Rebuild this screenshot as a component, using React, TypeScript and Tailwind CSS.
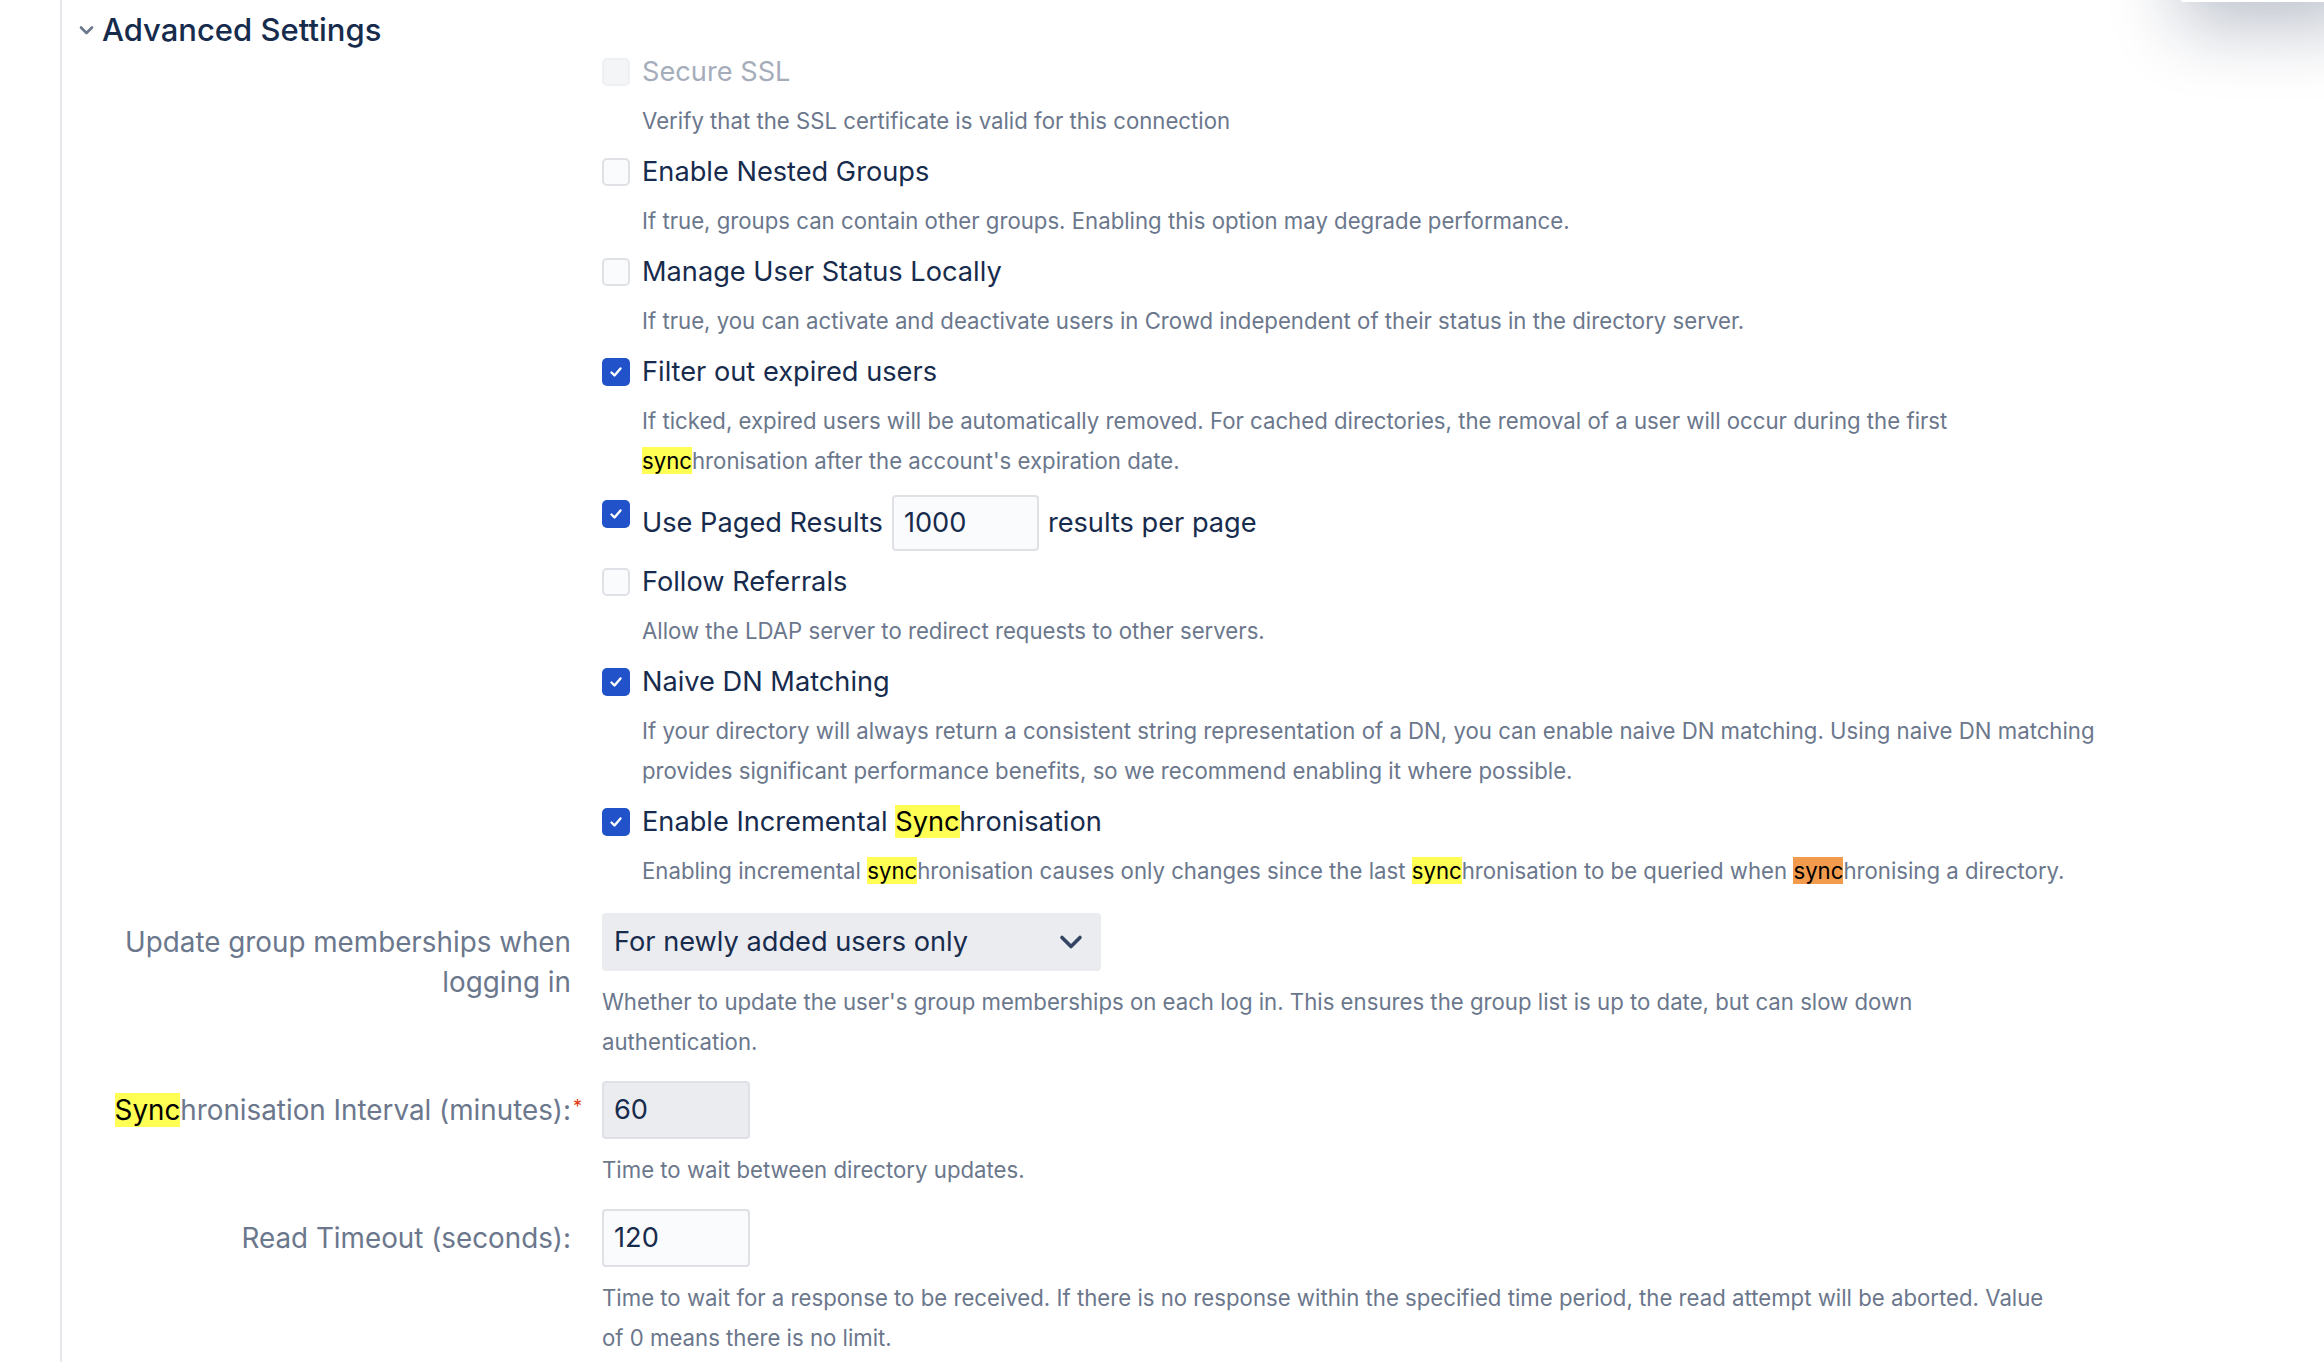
import type { ReactNode } from 'react'

type Option = {
  label: ReactNode
  checked: boolean
  disabled?: boolean
  desc?: ReactNode
}

function Hl({ children, orange }: { children: ReactNode; orange?: boolean }) {
  return <span className={`${orange ? 'bg-[#f29b4c]' : 'bg-[#ffff54]'} text-black`}>{children}</span>
}

function Checkbox({ checked, disabled }: { checked: boolean; disabled?: boolean }) {
  if (checked) {
    return (
      <span className="w-[28px] h-[28px] rounded-[5px] bg-[#2152c9] flex items-center justify-center shrink-0">
        <svg width="16" height="16" viewBox="0 0 16 16" fill="none">
          <path d="M3.5 8.5l3 3 6-7" stroke="white" strokeWidth="2.4" strokeLinecap="round" strokeLinejoin="round" />
        </svg>
      </span>
    )
  }
  return (
    <span
      className={`block w-[28px] h-[28px] rounded-[5px] border-2 shrink-0 ${
        disabled ? 'bg-[#f4f5f7] border-[#eef0f3]' : 'bg-[#fafbfc] border-[#dfe1e6]'
      }`}
    />
  )
}

const options: Option[] = [
  {
    label: 'Secure SSL',
    checked: false,
    disabled: true,
    desc: 'Verify that the SSL certificate is valid for this connection',
  },
  {
    label: 'Enable Nested Groups',
    checked: false,
    desc: 'If true, groups can contain other groups. Enabling this option may degrade performance.',
  },
  {
    label: 'Manage User Status Locally',
    checked: false,
    desc: 'If true, you can activate and deactivate users in Crowd independent of their status in the directory server.',
  },
  {
    label: 'Filter out expired users',
    checked: true,
    desc: (
      <>
        If ticked, expired users will be automatically removed. For cached directories, the removal of a user will occur during the first
        <br />
        <Hl>sync</Hl>hronisation after the account's expiration date.
      </>
    ),
  },
]

const moreOptions: Option[] = [
  {
    label: 'Follow Referrals',
    checked: false,
    desc: 'Allow the LDAP server to redirect requests to other servers.',
  },
  {
    label: 'Naive DN Matching',
    checked: true,
    desc: (
      <>
        If your directory will always return a consistent string representation of a DN, you can enable naive DN matching. Using naive DN matching
        <br />
        provides significant performance benefits, so we recommend enabling it where possible.
      </>
    ),
  },
  {
    label: (
      <>
        Enable Incremental <Hl>Sync</Hl>hronisation
      </>
    ),
    checked: true,
    desc: (
      <>
        Enabling incremental <Hl>sync</Hl>hronisation causes only changes since the last <Hl>sync</Hl>hronisation to be queried when{' '}
        <Hl orange>sync</Hl>hronising a directory.
      </>
    ),
  },
]

function CheckRow({ opt }: { opt: Option }) {
  return (
    <div className="pl-[540px] mb-[11px]">
      <div className="flex items-start gap-[12px]">
        <span className="mt-[6px]">
          <Checkbox checked={opt.checked} disabled={opt.disabled} />
        </span>
        <span className={`text-[27.2px] leading-[40px] ${opt.disabled ? 'text-[#a5adba]' : 'text-[#172b4d]'}`}>{opt.label}</span>
      </div>
      {opt.desc && <p className="ml-[40px] mt-[9px] text-[22.2px] leading-[40px] text-[#6b778c] whitespace-nowrap">{opt.desc}</p>}
    </div>
  )
}

function FieldRow({ label, children, desc }: { label: ReactNode; children: ReactNode; desc: ReactNode }) {
  return (
    <div className="flex items-start">
      <div className="w-[509px] shrink-0 text-right text-[27.8px] leading-[40px] text-[#6b778c] pt-[9px]">{label}</div>
      <div className="ml-[31px]">
        {children}
        <p className="mt-[11px] text-[22.2px] leading-[40px] text-[#6b778c] whitespace-nowrap">{desc}</p>
      </div>
    </div>
  )
}

function TextInput({ value, gray }: { value: string; gray?: boolean }) {
  return (
    <div
      className={`w-[148px] h-[58px] rounded-[4px] border-2 border-[#dfe1e6] px-[10px] flex items-center text-[27.2px] text-[#172b4d] ${
        gray ? 'bg-[#ebecf0]' : 'bg-[#fafbfc]'
      }`}
    >
      {value}
    </div>
  )
}

export default function App() {
  return (
    <div className="relative h-screen overflow-hidden bg-white font-['Inter','Liberation_Sans',sans-serif]">
      <div className="absolute right-[-40px] top-[-200px] w-[184px] h-[202px] bg-white rounded-[4px] shadow-[0_24px_70px_rgba(9,30,66,0.28)]" />

      <div className="ml-[60px] h-full border-l-2 border-[#e6e8ec] pt-[10px]">
        <div className="flex items-center pl-[16px] h-[40px] gap-[7px]">
          <svg width="17" height="12" viewBox="0 0 17 12" fill="none">
            <path d="M3 3.5l5.5 5.5 5.5-5.5" stroke="#6b778c" strokeWidth="2.6" strokeLinecap="round" strokeLinejoin="round" />
          </svg>
          <h2 className="text-[31px] leading-[40px] font-medium text-[#172b4d]">Advanced Settings</h2>
        </div>

        <div className="mt-[2px]">
          {options.map((o, i) => (
            <CheckRow key={i} opt={o} />
          ))}

          <div className="pl-[540px] mt-[14px] mb-[11px] flex items-start">
            <span className="mt-[5px]">
              <Checkbox checked />
            </span>
            <div className="ml-[12px] flex items-center h-[56px] gap-[9px] text-[27.2px] text-[#172b4d]">
              <span>Use Paged Results</span>
              <div className="w-[147px] h-[56px] rounded-[4px] border-2 border-[#dfe1e6] bg-[#fafbfc] px-[10px] flex items-center">1000</div>
              <span>results per page</span>
            </div>
          </div>

          {moreOptions.map((o, i) => (
            <CheckRow key={i} opt={o} />
          ))}
        </div>

        <div className="mt-[22px] flex flex-col gap-[19px]">
          <FieldRow
            label={
              <>
                Update group memberships when
                <br />
                logging in
              </>
            }
            desc={
              <>
                Whether to update the user's group memberships on each log in. This ensures the group list is up to date, but can slow down
                <br />
                authentication.
              </>
            }
          >
            <div className="w-[499px] h-[58px] rounded-[4px] bg-[#ebecf0] pl-[12px] pr-[16px] flex items-center justify-between text-[27.2px] text-[#172b4d]">
              <span>For newly added users only</span>
              <svg width="28" height="18" viewBox="0 0 28 18" fill="none">
                <path d="M5 4.5l9 9 9-9" stroke="#344563" strokeWidth="3.6" strokeLinecap="round" strokeLinejoin="round" />
              </svg>
            </div>
          </FieldRow>

          <FieldRow
            label={
              <span className="relative">
                <Hl>Sync</Hl>hronisation Interval (minutes):
                <span className="absolute left-full top-[-6px] ml-[2px] text-[#de350b] text-[18px]">*</span>
              </span>
            }
            desc="Time to wait between directory updates."
          >
            <TextInput value="60" gray />
          </FieldRow>

          <FieldRow
            label="Read Timeout (seconds):"
            desc={
              <>
                Time to wait for a response to be received. If there is no response within the specified time period, the read attempt will be aborted. Value
                <br />
                of 0 means there is no limit.
              </>
            }
          >
            <TextInput value="120" />
          </FieldRow>
        </div>
      </div>
    </div>
  )
}
